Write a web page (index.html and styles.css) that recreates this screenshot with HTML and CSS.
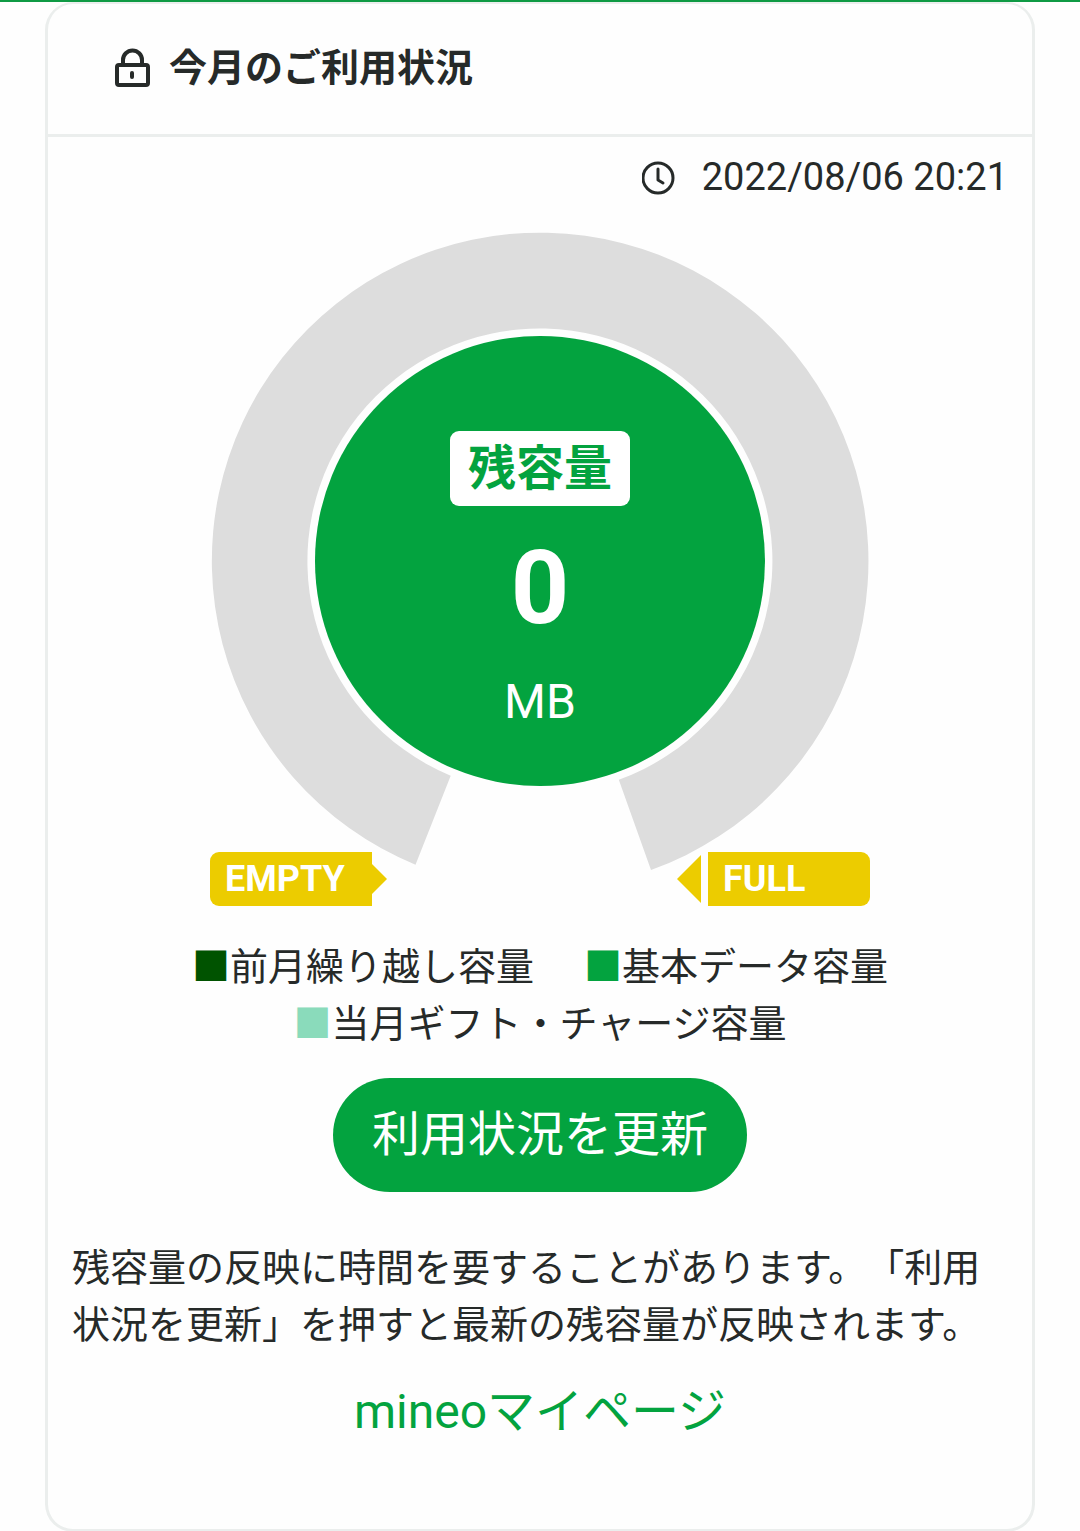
FILE: index.html
```html
<!DOCTYPE html>
<html lang="ja">
<head>
<meta charset="utf-8">
<meta name="viewport" content="width=device-width, initial-scale=1">
<title>今月のご利用状況</title>
<link rel="stylesheet" href="styles.css">
</head>
<body>
<main class="page">
  <section class="card">
    <header class="card-header">
      <svg class="icon-lock" viewBox="0 0 36 42" aria-hidden="true">
        <rect x="3" y="17" width="31" height="20" rx="2"/>
        <path d="M9 17V12a9 9 0 0 1 19 0v5"/>
        <path d="M18 25v4"/>
      </svg>
      <h1 class="card-title">今月のご利用状況</h1>
    </header>
    <div class="card-body">
      <p class="updated">
        <svg class="icon-clock" viewBox="0 0 34 34" aria-hidden="true">
          <circle cx="16" cy="17" r="15"/>
          <path d="M16 8v11l5 3"/>
        </svg>
        <time datetime="2022-08-06T20:21">2022/08/06 20:21</time>
      </p>

      <div class="gauge">
        <svg class="gauge-ring" viewBox="0 0 660 640" aria-hidden="true">
          <path class="gauge-track" d="M205.5 633.7A328.3 328.3 0 1 1 441 639L408.8 548.7A232.5 232.5 0 1 0 240.7 544.7Z"/>
          <circle class="gauge-core" cx="330" cy="330" r="225"/>
        </svg>
        <div class="gauge-value">
          <span class="gauge-label">残容量</span>
          <strong class="gauge-number">0</strong>
          <span class="gauge-unit">MB</span>
        </div>
      </div>
      <div class="scale">
        <span class="tag tag-empty">EMPTY</span>
        <span class="arrow arrow-right"></span>
        <span class="arrow arrow-left"></span>
        <span class="tag tag-full">FULL</span>
      </div>

      <ul class="legend">
        <li><span class="mark mark-carry">■</span>前月繰り越し容量</li>
        <li><span class="mark mark-base">■</span>基本データ容量</li>
        <li><span class="mark mark-gift">■</span>当月ギフト・チャージ容量</li>
      </ul>

      <button class="refresh" type="button">利用状況を更新</button>
      <p class="note">残容量の反映に時間を要することがあります。「利用状況を更新」を押すと最新の残容量が反映されます。</p>
      <a class="mypage" href="#">mineoマイページ</a>
    </div>
  </section>
</main>
</body>
</html>
```
FILE: styles.css
```css
* {
  box-sizing: border-box;
}

body {
  margin: 0;
  background: #fefefe;
  color: #262a29;
  font-family: Roboto, "Noto Sans CJK JP", sans-serif;
  font-size: 38px;
  line-height: 57px;
  text-spacing-trim: space-all;
}

h1, p, ul {
  margin: 0;
  padding: 0;
}

.page {
  border-top: 2px solid #0f9a44;
  padding: 0 45px;
}

.card {
  border: 3px solid #ebeeed;
  border-top-width: 2px;
  border-radius: 28px;
}

.card-header {
  display: flex;
  align-items: center;
  gap: 19px;
  padding: 36px 66px 37px;
  border-bottom: 3px solid #ebeeed;
}

.card-title {
  font-size: 38px;
  font-weight: 700;
}

.icon-lock, .icon-clock {
  flex: none;
  fill: none;
  stroke: #262a29;
  stroke-linecap: round;
  stroke-linejoin: round;
}

.icon-lock {
  width: 36px;
  height: 42px;
  stroke-width: 4;
}

.icon-clock {
  width: 34px;
  height: 34px;
  stroke-width: 3;
}

.card-body {
  display: flex;
  flex-direction: column;
  align-items: center;
  padding: 12px 24px 81px;
}

.updated {
  display: flex;
  align-items: center;
  align-self: flex-end;
  gap: 26px;
}

.gauge {
  display: grid;
  width: 100%;
  max-width: 660px;
  margin-top: 25px;
}

.gauge-ring, .gauge-value {
  grid-area: 1 / 1;
}

.gauge-ring {
  width: 100%;
}

.gauge-track {
  fill: #ddd;
}

.gauge-core {
  fill: #03a33f;
}

.gauge-value {
  display: flex;
  flex-direction: column;
  align-items: center;
  padding-top: 200px;
  color: #fff;
}

.gauge-label {
  padding: 0 18px;
  border-radius: 9px;
  background: #fff;
  color: #03a33f;
  font-size: 48px;
  font-weight: 700;
  line-height: 75px;
}

.gauge-number {
  margin-top: 3px;
  font-size: 102px;
  line-height: 158px;
}

.gauge-unit {
  font-size: 48px;
  line-height: 70px;
}

.scale {
  display: flex;
  align-items: center;
  width: 100%;
  max-width: 660px;
  margin-top: -19px;
}

.tag {
  width: 162px;
  padding: 0 15px;
  background: #eccc00;
  color: #fff;
  font-size: 36px;
  font-weight: 700;
  line-height: 54px;
}

.tag-empty {
  border-radius: 9px 0 0 9px;
}

.tag-full {
  border-radius: 0 9px 9px 0;
}

.arrow {
  background: #eccc00;
}

.arrow-right {
  width: 15px;
  height: 30px;
  clip-path: polygon(0 0, 100% 50%, 0 100%);
}

.arrow-left {
  width: 24px;
  height: 48px;
  margin: 0 7px 0 auto;
  clip-path: polygon(100% 0, 0 50%, 100% 100%);
}

.legend {
  display: flex;
  flex-wrap: wrap;
  justify-content: center;
  column-gap: 50px;
  max-width: 760px;
  margin-top: 33px;
  list-style: none;
}

.mark-carry {
  color: #005300;
}

.mark-base {
  color: #03a33f;
}

.mark-gift {
  color: #8adbbb;
}

.refresh {
  margin-top: 25px;
  padding: 21px 39px;
  border: 0;
  border-radius: 57px;
  background: #03a33f;
  color: #fff;
  font: inherit;
  font-size: 48px;
  line-height: 72px;
}

.note {
  align-self: stretch;
  margin-top: 48px;
}

.mypage {
  margin-top: 22px;
  color: #03a33f;
  font-size: 48px;
  line-height: 72px;
  text-decoration: none;
}
```
